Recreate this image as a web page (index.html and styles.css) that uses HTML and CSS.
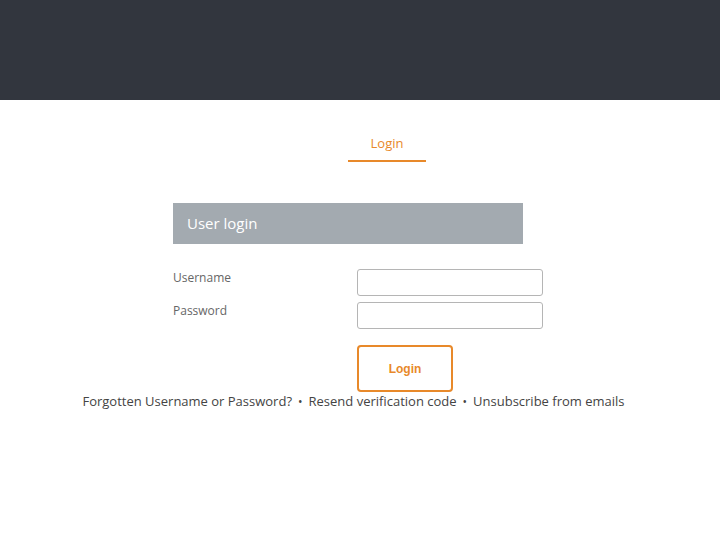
FILE: index.html
```html
<!DOCTYPE html>
<html>
<head>
<meta charset="utf-8">
<link rel="stylesheet" href="styles.css">
</head>
<body>
<header class="topbar"></header>
<nav class="tabs">
  <a class="tab active">Login</a>
</nav>
<main class="content">
  <section class="login">
    <h2 class="panel-title">User login</h2>
    <form class="form">
      <div class="row">
        <label class="label">Username</label>
        <input class="input" type="text">
      </div>
      <div class="row">
        <label class="label">Password</label>
        <input class="input" type="password">
      </div>
      <div class="actions">
        <button class="btn" type="button">Login</button>
      </div>
    </form>
  </section>
  <p class="links">
    <a>Forgotten Username or Password?</a><span class="sep">•</span><a>Resend verification code</a><span class="sep">•</span><a>Unsubscribe from emails</a>
  </p>
</main>
</body>
</html>
```
FILE: styles.css
```css
* { box-sizing: border-box; }
html, body { margin: 0; padding: 0; background: #fff; }
body { font-family: "Open Sans", "Liberation Sans", sans-serif; color: #444; }
.topbar { height: 100px; background: #32363e; }
.tabs { display: flex; justify-content: center; padding-top: 33px; padding-left: 54px; }
.tab {
  display: block;
  width: 78px;
  text-align: center;
  font-size: 13px;
  color: #e8892a;
  line-height: 20px;
  padding-bottom: 7px;
  border-bottom: 2px solid #e8892a;
}
.content { padding-top: 41px; }
.login { width: 370px; margin-left: 173px; }
.panel-title {
  margin: 0;
  width: 350px;
  height: 41px;
  background: #a3aab0;
  color: #fff;
  font-weight: 400;
  font-size: 15px;
  line-height: 41px;
  padding-left: 14px;
}
.form { margin: 0; padding-top: 25px; }
.row { display: flex; align-items: flex-start; margin-bottom: 6px; }
.label { width: 184px; font-size: 12px; color: #666; padding-top: 1px; line-height: 16px; }
.input {
  width: 186px;
  height: 27px;
  border: 1px solid #b5b5b5;
  border-radius: 3px;
  margin: 0;
  padding: 0 6px;
  background: #fff;
}
.actions { padding-left: 184px; padding-top: 10px; }
.btn {
  width: 96px;
  height: 47px;
  border: 2px solid #e8892a;
  border-radius: 4px;
  background: #fff;
  color: #e8892a;
  font-family: "Liberation Sans", Arial, sans-serif;
  font-weight: 700;
  font-size: 12px;
  margin: 0;
  padding: 0;
}
.links {
  margin: 0;
  padding-right: 13px;
  text-align: center;
  font-size: 13px;
  line-height: 18px;
  color: #444;
}
.sep { margin: 0 6px; font-size: 12px; }
```
